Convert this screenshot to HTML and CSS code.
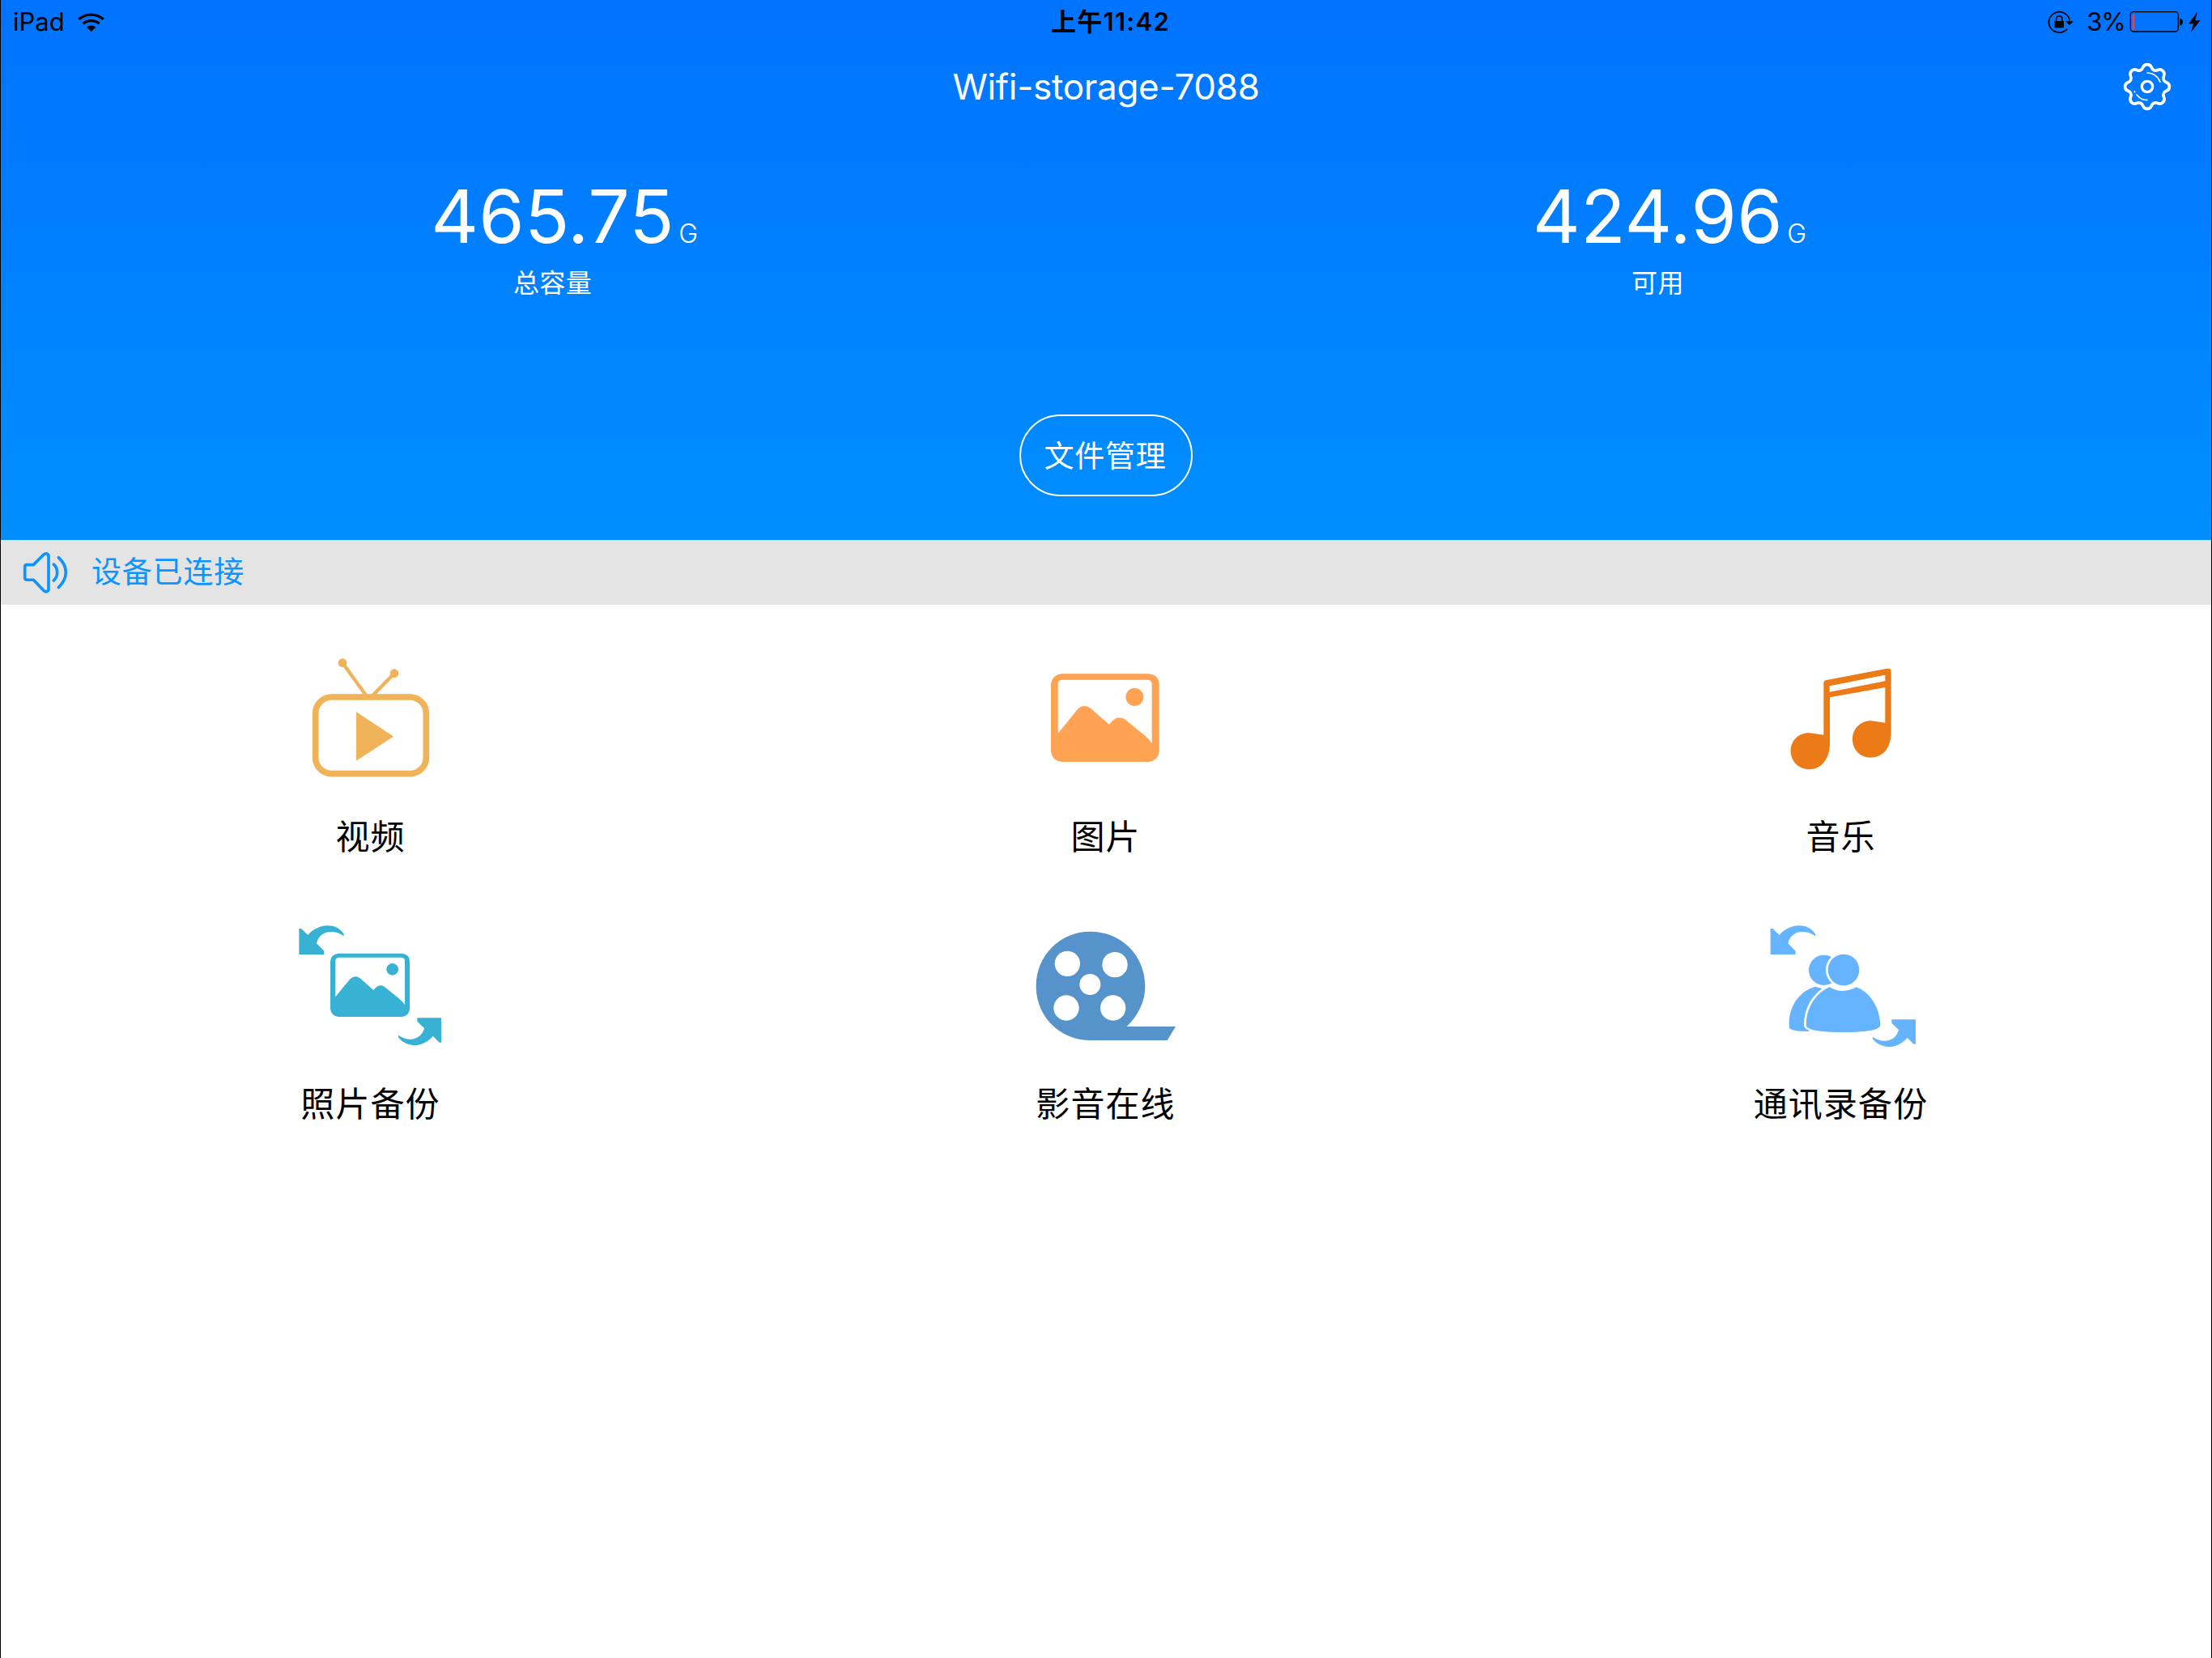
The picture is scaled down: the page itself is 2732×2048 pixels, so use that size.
FILE: index.html
```html
<!DOCTYPE html>
<html lang="zh-CN">
<head>
  <meta charset="UTF-8">
  <title>Wifi-storage-7088</title>
  <link rel="stylesheet" href="styles.css">
</head>
<body>
  <header class="header">
    <div class="status">
      <div class="status-left">
        <span class="device">iPad</span>
        <svg class="wifi" viewBox="287 40 105 78">
          <g fill="none" stroke="#000" stroke-width="10">
            <path d="M294 69A70 70 0 0 1 385 69"/>
            <path d="M310 86A46 46 0 0 1 370 86"/>
          </g>
          <path d="M323 99Q340 86 357 99L340 115Z"/>
        </svg>
      </div>
      <div class="time">上午11:42</div>
      <div class="status-right">
        <svg class="lock" viewBox="147 36 99 87">
          <path d="M229 74A39 38 0 1 0 220 104" fill="none" stroke="#000" stroke-width="5"/>
          <path d="M214 76H242L228 91Z"/>
          <path d="M173 75H207V100H173Z"/>
          <path d="M179 76V67A11 11 0 0 1 201 67V76" fill="none" stroke="#000" stroke-width="5"/>
        </svg>
        <span class="percent">3%</span>
        <svg class="battery" viewBox="448 40 200 84">
          <rect x="452" y="45" width="177" height="73" rx="11" fill="none" stroke="#000" stroke-width="4"/>
          <path d="M459 58Q459 52 467 52V112Q459 112 459 106Z" fill="#ff3b30"/>
          <path d="M635 69Q646 71 646 82T635 96Z"/>
        </svg>
        <svg class="bolt" viewBox="667 40 50 80">
          <path d="M703 42L670 86H688L679 118L714 73H695Z"/>
        </svg>
      </div>
    </div>

    <div class="nav">
      <span></span>
      <h1>Wifi-storage-7088</h1>
      <svg class="gear" viewBox="-90 -90 180 180" fill="none" stroke="#fff" stroke-linecap="round" stroke-linejoin="round">
        <path stroke-width="11" d="M-16-71A17 17 0 0 1 16-71A16 16 0 0 0 38.9-61.5A17 17 0 0 1 61.5-38.9A16 16 0 0 0 71-16A17 17 0 0 1 71 16A16 16 0 0 0 61.5 38.9A17 17 0 0 1 38.9 61.5A16 16 0 0 0 16 71A17 17 0 0 1-16 71A16 16 0 0 0-38.9 61.5A17 17 0 0 1-61.5 38.9A16 16 0 0 0-71 16A17 17 0 0 1-71-16A16 16 0 0 0-61.5-38.9A17 17 0 0 1-38.9-61.5A16 16 0 0 0-16-71Z"/>
        <circle r="20" stroke-width="10"/>
        <path stroke-width="5" d="M0-51A51 51 0 0 1 48-17M0 50A50 50 0 0 1-39 30M-46 20L-47 17"/>
      </svg>
    </div>

    <div class="stats">
      <div class="stat">
        <div class="value">465.75<small>G</small></div>
        <div class="caption">总容量</div>
      </div>
      <div class="stat">
        <div class="value">424.96<small>G</small></div>
        <div class="caption">可用</div>
      </div>
    </div>

    <button class="files">文件管理</button>
  </header>

  <div class="notice">
    <svg class="speaker" viewBox="84 90 168 158" fill="none" stroke="#0d94ff" stroke-width="11" stroke-linecap="round" stroke-linejoin="round">
      <path d="M100 140H124L162 102Q168 97 174 99Q180 101 180 109V230Q180 237 174 239Q168 241 162 236L124 196H100Q92 196 92 188V148Q92 140 100 140Z"/>
      <path d="M199 139Q212 149 212 168T199 198M217 113Q244 138 244 168T217 224"/>
    </svg>
    <span>设备已连接</span>
  </div>

  <main class="grid">
    <div class="tile">
      <svg viewBox="54 0 600 600" fill="#f0b35a" stroke="#f0b35a">
        <rect x="149" y="213" width="410" height="284" rx="60" fill="none" stroke-width="23"/>
        <path d="M249 86L337 208M441 125L360 208" stroke-width="13"/>
        <g stroke="none">
          <circle cx="249" cy="86" r="16"/>
          <circle cx="441" cy="125" r="16"/>
          <path d="M300 268L438 359L300 449Z"/>
        </g>
      </svg>
      <p>视频</p>
    </div>
    <div class="tile">
      <svg viewBox="19 0 600 600" fill="#ffa254">
        <path fill-rule="evenodd" d="M155 127H476Q516 131 516 167V413Q512 449 476 453H155Q119 449 115 413V167Q119 131 155 127ZM155 149Q141 151 141 163V348L214 258Q237 236 262 255L331 315Q355 278 387 294L456 350Q478 368 489 385V163Q487 151 475 149Z"/>
        <circle cx="425" cy="213" r="33"/>
      </svg>
      <p>图片</p>
    </div>
    <div class="tile">
      <svg viewBox="41 0 600 600" fill="#ec7a17">
        <path fill-rule="evenodd" d="M283 151L512 107Q526 106 526 117V345C525 398 499 437 451 437C411 437 383 408 383 369C383 330 414 301 450 301L504 308V177L299 214V388C298 442 268 481 223 481C184 481 154 452 154 412C154 374 185 346 221 346L276 353V160Q277 153 283 151ZM298 172V194L504 154V131Z"/>
      </svg>
      <p>音乐</p>
    </div>
    <div class="tile">
      <svg viewBox="54 0 600 600" fill="#37b2d4">
        <path d="M88 81H96L121 105C154 66 222 53 254 101V109C219 83 163 87 153 136L181 164V177H88Z"/>
        <path d="M615 412V503H608L584 479C547 524 486 523 456 484V476C495 504 542 492 552 450L526 425V412Z"/>
        <path fill-rule="evenodd" d="M234 173H469Q498 176 498 203V379Q496 405 469 408H234Q207 405 204 379V203Q206 176 234 173ZM235 188Q223 190 223 200V334L277 268Q295 252 313 264L364 309Q382 284 404 296L458 340Q473 353 480 363V200Q480 190 468 188Z"/>
        <circle cx="434" cy="232" r="22"/>
      </svg>
      <p>照片备份</p>
    </div>
    <div class="tile">
      <svg viewBox="48 0 600 600" fill="#5593ca">
        <path d="M290 92C407 92 493 183 493 294C493 350 468 403 425 444H606L575 495H290C174 495 89 404 89 294C89 182 177 92 290 92Z"/>
        <g fill="#fff">
          <circle cx="205" cy="211" r="47"/>
          <circle cx="381" cy="215" r="47"/>
          <circle cx="289" cy="288" r="39"/>
          <circle cx="201" cy="375" r="47"/>
          <circle cx="374" cy="375" r="47"/>
        </g>
      </svg>
      <p>影音在线</p>
    </div>
    <div class="tile">
      <svg viewBox="0 0 600 600" fill="#66b3ff">
        <path d="M38 81H46L71 105C104 66 172 53 204 101V109C169 83 113 87 103 136L131 164V177H38Z"/>
        <path d="M576 418V509H569L545 485C508 530 447 529 417 490V482C456 510 503 498 513 456L487 431V418Z"/>
        <circle cx="236" cy="235" r="56"/>
        <path d="M108 450C100 375 145 310 205 296Q240 310 270 300L180 462Q120 462 108 450Z"/>
        <g stroke="#fff" stroke-width="8">
          <circle cx="309" cy="234" r="62"/>
          <path d="M166 438C166 370 205 315 256 293Q306 323 356 293C410 313 447 370 449 440Q445 469 306 469Q166 469 166 438Z"/>
        </g>
      </svg>
      <p>通讯录备份</p>
    </div>
  </main>
</body>
</html>
```

FILE: styles.css
```css
* { box-sizing: border-box; margin: 0; padding: 0; }
body { min-height: 2048px; background: #fff; color: #000; font-family: Inter, "Noto Sans CJK SC", sans-serif; border-left: 1px solid #000; border-right: 1px solid #000; }
svg { display: block; flex: none; }

.header { height: 667px; display: flex; flex-direction: column; background: linear-gradient(#0073ff, #008fff); color: #fff; }

.status { height: 54px; display: grid; grid-template-columns: 1fr auto 1fr; align-items: center; padding: 0 12px 0 15px; color: #000; font-size: 31px; line-height: 54px; }
.status-left, .status-right { display: flex; align-items: center; }
.status-right { justify-content: flex-end; }
.device { letter-spacing: 0; }
.wifi { width: 35px; height: 26px; margin-left: 15px; }
.time { font-weight: 600; padding-left: 8px; letter-spacing: 1.3px; }
.lock { width: 33px; height: 29px; }
.percent { margin: 0 5px 0 15px; letter-spacing: -1px; }
.battery { width: 66.6px; height: 28px; }
.bolt { width: 16.6px; height: 26.6px; margin-left: 6px; }

.nav { height: 105px; display: grid; grid-template-columns: 1fr auto 1fr; align-items: center; padding: 0 49px; }
.nav h1 { font-size: 44px; font-weight: 400; line-height: 60px; letter-spacing: -0.3px; }
.gear { width: 60px; height: 60px; justify-self: end; }

.stats { display: flex; margin-top: 54px; }
.stat { flex: 1; text-align: center; }
.value { display: flex; justify-content: center; align-items: baseline; font-size: 91px; line-height: 108px; letter-spacing: 0.3px; }
.value small { width: 30px; margin-right: -28px; padding-left: 5px; font-size: 32px; font-weight: 300; line-height: 40px; }
.caption { margin-top: 9px; font-size: 32px; line-height: 40px; letter-spacing: 0.4px; padding-right: 2px; }

.files { align-self: center; width: 214px; height: 101px; margin-top: 142px; padding: 0 2px 3px 0; border: 2.5px solid #fff; border-radius: 51px; background: none; color: #fff; font-family: inherit; font-size: 37px; letter-spacing: 0.8px; }

.notice { height: 80px; display: flex; align-items: center; padding-left: 27px; background: #e4e4e4; color: #0d94ff; font-size: 37px; line-height: 82px; letter-spacing: 0.8px; }
.speaker { width: 56px; height: 52.6px; margin-right: 29px; }

.grid { display: grid; grid-template-columns: repeat(3, 908px); row-gap: 57px; padding: 43px 3px 0; }
.tile { display: flex; flex-direction: column; align-items: center; }
.tile svg { width: 200px; height: 200px; }
.tile p { margin-top: 13px; padding-right: 1px; font-size: 42px; line-height: 61px; height: 60px; letter-spacing: 1.1px; }
```
